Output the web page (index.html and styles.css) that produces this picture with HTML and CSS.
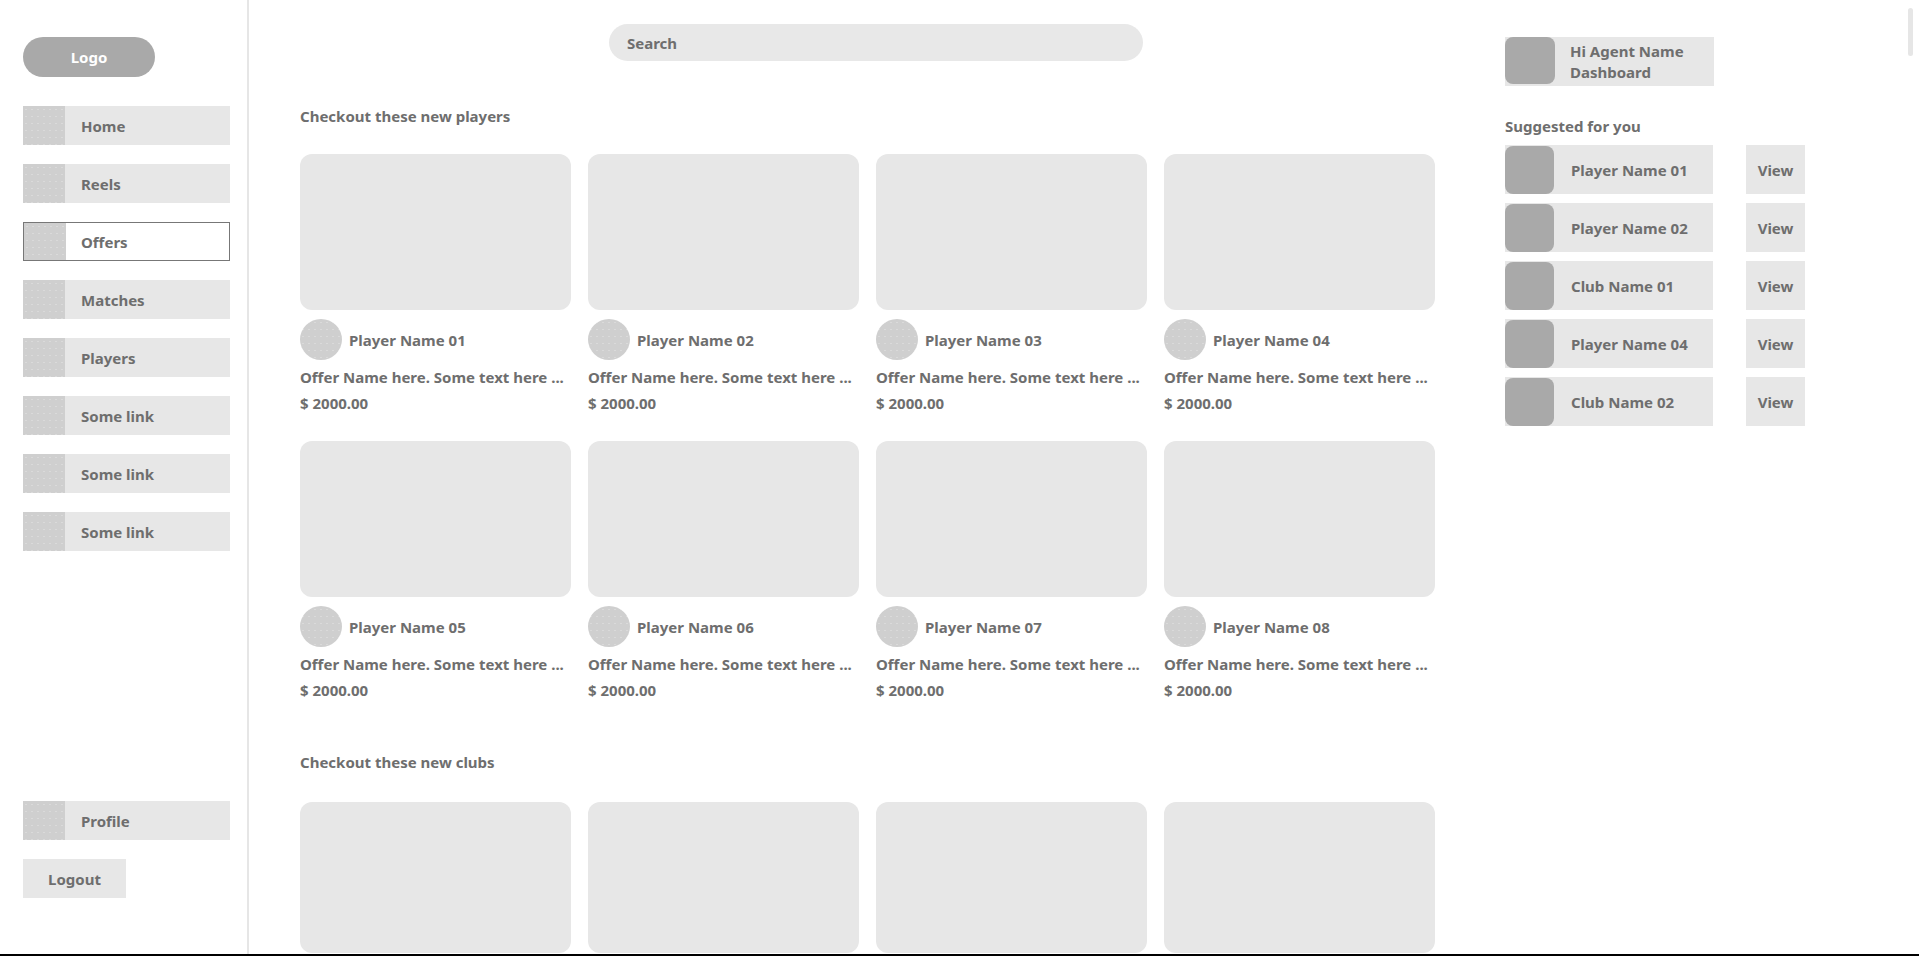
FILE: index.html
```html
<!DOCTYPE html>
<html lang="en">
<head>
    <meta charset="UTF-8">
    <meta name="viewport" content="width=device-width, initial-scale=1.0">
    <title>Agent Dashboard</title>
    <link rel="stylesheet" href="styles.css">
</head>
<body>
    <div class="app">
        <aside class="sidebar">
            <div class="logo">Logo</div>
            <nav class="nav">
                <a class="nav-item"><span class="nav-icon"></span><span class="nav-label">Home</span></a>
                <a class="nav-item"><span class="nav-icon"></span><span class="nav-label">Reels</span></a>
                <a class="nav-item active"><span class="nav-icon"></span><span class="nav-label">Offers</span></a>
                <a class="nav-item"><span class="nav-icon"></span><span class="nav-label">Matches</span></a>
                <a class="nav-item"><span class="nav-icon"></span><span class="nav-label">Players</span></a>
                <a class="nav-item"><span class="nav-icon"></span><span class="nav-label">Some link</span></a>
                <a class="nav-item"><span class="nav-icon"></span><span class="nav-label">Some link</span></a>
                <a class="nav-item"><span class="nav-icon"></span><span class="nav-label">Some link</span></a>
            </nav>
            <div class="sidebar-bottom">
                <a class="nav-item"><span class="nav-icon"></span><span class="nav-label">Profile</span></a>
                <a class="logout">Logout</a>
            </div>
        </aside>

        <main class="main">
            <div class="search">Search</div>

            <div class="section-title">Checkout these new players</div>
            <div class="grid">
                <div class="card">
                    <div class="card-img"></div>
                    <div class="card-player"><span class="avatar"></span><span>Player Name 01</span></div>
                    <div class="card-offer">Offer Name here. Some text here ...</div>
                    <div class="card-price">$ 2000.00</div>
                </div>
                <div class="card">
                    <div class="card-img"></div>
                    <div class="card-player"><span class="avatar"></span><span>Player Name 02</span></div>
                    <div class="card-offer">Offer Name here. Some text here ...</div>
                    <div class="card-price">$ 2000.00</div>
                </div>
                <div class="card">
                    <div class="card-img"></div>
                    <div class="card-player"><span class="avatar"></span><span>Player Name 03</span></div>
                    <div class="card-offer">Offer Name here. Some text here ...</div>
                    <div class="card-price">$ 2000.00</div>
                </div>
                <div class="card">
                    <div class="card-img"></div>
                    <div class="card-player"><span class="avatar"></span><span>Player Name 04</span></div>
                    <div class="card-offer">Offer Name here. Some text here ...</div>
                    <div class="card-price">$ 2000.00</div>
                </div>
                <div class="card">
                    <div class="card-img"></div>
                    <div class="card-player"><span class="avatar"></span><span>Player Name 05</span></div>
                    <div class="card-offer">Offer Name here. Some text here ...</div>
                    <div class="card-price">$ 2000.00</div>
                </div>
                <div class="card">
                    <div class="card-img"></div>
                    <div class="card-player"><span class="avatar"></span><span>Player Name 06</span></div>
                    <div class="card-offer">Offer Name here. Some text here ...</div>
                    <div class="card-price">$ 2000.00</div>
                </div>
                <div class="card">
                    <div class="card-img"></div>
                    <div class="card-player"><span class="avatar"></span><span>Player Name 07</span></div>
                    <div class="card-offer">Offer Name here. Some text here ...</div>
                    <div class="card-price">$ 2000.00</div>
                </div>
                <div class="card">
                    <div class="card-img"></div>
                    <div class="card-player"><span class="avatar"></span><span>Player Name 08</span></div>
                    <div class="card-offer">Offer Name here. Some text here ...</div>
                    <div class="card-price">$ 2000.00</div>
                </div>
            </div>

            <div class="section-title clubs-title">Checkout these new clubs</div>
            <div class="grid clubs">
                <div class="card"><div class="card-img"></div></div>
                <div class="card"><div class="card-img"></div></div>
                <div class="card"><div class="card-img"></div></div>
                <div class="card"><div class="card-img"></div></div>
            </div>
        </main>

        <aside class="aside">
            <div class="agent">
                <span class="agent-avatar"></span>
                <div class="agent-text">Hi Agent Name<br>Dashboard</div>
            </div>
            <div class="suggest-title">Suggested for you</div>
            <div class="suggest-list">
                <div class="suggest-row">
                    <div class="suggest-item"><span class="suggest-avatar"></span><span class="suggest-name">Player Name 01</span></div>
                    <a class="view-btn">View</a>
                </div>
                <div class="suggest-row">
                    <div class="suggest-item"><span class="suggest-avatar"></span><span class="suggest-name">Player Name 02</span></div>
                    <a class="view-btn">View</a>
                </div>
                <div class="suggest-row">
                    <div class="suggest-item"><span class="suggest-avatar"></span><span class="suggest-name">Club Name 01</span></div>
                    <a class="view-btn">View</a>
                </div>
                <div class="suggest-row">
                    <div class="suggest-item"><span class="suggest-avatar"></span><span class="suggest-name">Player Name 04</span></div>
                    <a class="view-btn">View</a>
                </div>
                <div class="suggest-row">
                    <div class="suggest-item"><span class="suggest-avatar"></span><span class="suggest-name">Club Name 02</span></div>
                    <a class="view-btn">View</a>
                </div>
            </div>
        </aside>
    </div>
    <div class="scroll-thumb"></div>
</body>
</html>
```

FILE: styles.css
```css
* {
    box-sizing: border-box;
    margin: 0;
    padding: 0;
    font-family: 'Noto Sans', 'Open Sans', sans-serif;
}
body {
    font-size: 15px;
    font-weight: 700;
    color: #6e6e6e;
    background: #ffffff;
    overflow: hidden;
}
a {
    color: inherit;
    text-decoration: none;
    cursor: pointer;
}
.app {
    display: flex;
    height: 100vh;
    border-bottom: 2px solid #000000;
    overflow: hidden;
}

/* sidebar */
.sidebar {
    width: 249px;
    flex-shrink: 0;
    border-right: 2px solid #e6e6e6;
    padding: 37px 0 56px 23px;
    display: flex;
    flex-direction: column;
}
.logo {
    width: 132px;
    height: 40px;
    border-radius: 20px;
    background: #a9a9a9;
    color: #ffffff;
    display: flex;
    align-items: center;
    justify-content: center;
}
.nav {
    margin-top: 29px;
    display: flex;
    flex-direction: column;
    gap: 19px;
    width: 207px;
}
.nav-item {
    display: flex;
    align-items: center;
    width: 207px;
    height: 39px;
    background: #e7e7e7;
}
.nav-item.active {
    background: #ffffff;
    border: 1px solid #777777;
}
.nav-icon {
    width: 42px;
    align-self: stretch;
    background-color: #cfcfcf;
    background-image: radial-gradient(rgba(255, 255, 255, 0.22) 0.6px, transparent 1px);
    background-size: 6px 7px;
}
.nav-label {
    padding-left: 16px;
}
.nav-item.active .nav-label {
    padding-left: 15px;
}
.sidebar-bottom {
    margin-top: auto;
    display: flex;
    flex-direction: column;
    gap: 19px;
}
.logout {
    width: 103px;
    height: 39px;
    background: #e7e7e7;
    display: flex;
    align-items: center;
    justify-content: center;
}

/* main feed */
.main {
    flex-shrink: 0;
    width: 1135px;
    margin-left: 51px;
    padding-top: 24px;
}
.search {
    margin-left: 309px;
    width: 534px;
    height: 37px;
    border-radius: 19px;
    background: #e8e8e8;
    padding-left: 18px;
    display: flex;
    align-items: center;
}
.section-title {
    margin-top: 45px;
    line-height: 20px;
}
.grid {
    display: grid;
    grid-template-columns: repeat(4, 271px);
    column-gap: 17px;
    row-gap: 27px;
    margin-top: 28px;
}
.card-img {
    height: 156px;
    border-radius: 12px;
    background: #e7e7e7;
}
.card-player {
    display: flex;
    align-items: center;
    gap: 7px;
    margin-top: 9px;
}
.avatar {
    width: 42px;
    height: 41px;
    border-radius: 50%;
    background-color: #cfcfcf;
    background-image: radial-gradient(rgba(255, 255, 255, 0.22) 0.6px, transparent 1px);
    background-size: 6px 7px;
}
.card-offer {
    margin-top: 6px;
    line-height: 22px;
    white-space: nowrap;
}
.card-price {
    margin-top: 4px;
    line-height: 22px;
}
.clubs-title {
    margin-top: 51px;
}
.clubs {
    margin-top: 30px;
}
.clubs .card-img {
    height: 151px;
}

/* right column */
.aside {
    margin-left: 70px;
    padding-top: 37px;
}
.agent {
    display: flex;
    align-items: center;
    width: 209px;
    height: 49px;
    background: #e7e7e7;
}
.agent-avatar {
    align-self: flex-start;
    width: 50px;
    height: 47px;
    border-radius: 8px;
    background: #a9a9a9;
}
.agent-text {
    padding-left: 15px;
    line-height: 21px;
}
.suggest-title {
    margin-top: 30px;
    line-height: 20px;
}
.suggest-list {
    margin-top: 9px;
    display: flex;
    flex-direction: column;
    gap: 9px;
}
.suggest-row {
    display: flex;
    gap: 33px;
}
.suggest-item {
    display: flex;
    align-items: center;
    width: 208px;
    height: 49px;
    background: #e7e7e7;
}
.suggest-avatar {
    width: 49px;
    height: 48px;
    border-radius: 8px;
    background: #a9a9a9;
}
.suggest-name {
    padding-left: 17px;
}
.view-btn {
    width: 59px;
    height: 49px;
    background: #e7e7e7;
    display: flex;
    align-items: center;
    justify-content: center;
}

.scroll-thumb {
    position: fixed;
    top: 8px;
    right: 6px;
    width: 5px;
    height: 48px;
    border-radius: 3px;
    background: #e6e6e6;
}
```
